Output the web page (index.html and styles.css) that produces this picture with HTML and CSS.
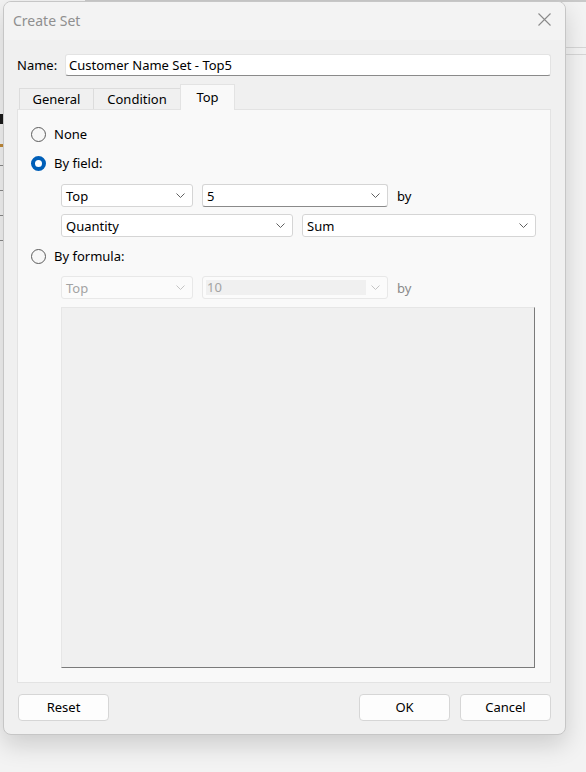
FILE: index.html
```html
<!DOCTYPE html>
<html>
<head>
<meta charset="utf-8">
<link rel="stylesheet" href="styles.css">
</head>
<body>
<div class="dialog">
  <div class="titlebar">
    <span class="title">Create Set</span>
    <svg class="close" width="13" height="13" viewBox="0 0 13 13"><path d="M0.5 0.5 L12.5 12.5 M12.5 0.5 L0.5 12.5" stroke="#8a8a8a" stroke-width="1.1" fill="none"/></svg>
  </div>
  <div class="content">
    <div class="name-row">
      <span class="name-label">Name:</span>
      <div class="name-input">Customer Name Set - Top5</div>
    </div>
    <div class="tabs">
      <div class="tab tab-general">General</div>
      <div class="tab tab-condition">Condition</div>
      <div class="tab tab-top active">Top</div>
    </div>
    <div class="panel">
      <div class="radio-row r-none"><span class="radio"></span><span>None</span></div>
      <div class="radio-row r-field"><span class="radio checked"></span><span>By field:</span></div>
      <div class="sel-row row1">
        <div class="select w-top"><span>Top</span><svg class="chev" width="9" height="5" viewBox="0 0 9 5"><path d="M0.5 0.5 L4.5 4.5 L8.5 0.5" stroke="#606060" fill="none"/></svg></div>
        <div class="select edit w-five"><span>5</span><svg class="chev" width="9" height="5" viewBox="0 0 9 5"><path d="M0.5 0.5 L4.5 4.5 L8.5 0.5" stroke="#606060" fill="none"/></svg></div>
        <span class="by">by</span>
      </div>
      <div class="sel-row row2">
        <div class="select w-qty"><span>Quantity</span><svg class="chev" width="9" height="5" viewBox="0 0 9 5"><path d="M0.5 0.5 L4.5 4.5 L8.5 0.5" stroke="#606060" fill="none"/></svg></div>
        <div class="select w-sum"><span>Sum</span><svg class="chev" width="9" height="5" viewBox="0 0 9 5"><path d="M0.5 0.5 L4.5 4.5 L8.5 0.5" stroke="#606060" fill="none"/></svg></div>
      </div>
      <div class="radio-row r-formula"><span class="radio"></span><span>By formula:</span></div>
      <div class="sel-row row3">
        <div class="select disabled w-top"><span>Top</span><svg class="chev" width="9" height="5" viewBox="0 0 9 5"><path d="M0.5 0.5 L4.5 4.5 L8.5 0.5" stroke="#c4c4c4" fill="none"/></svg></div>
        <div class="select disabled w-five"><span class="inner-field">10</span><svg class="chev" width="9" height="5" viewBox="0 0 9 5"><path d="M0.5 0.5 L4.5 4.5 L8.5 0.5" stroke="#c4c4c4" fill="none"/></svg></div>
        <span class="by disabled-text">by</span>
      </div>
      <div class="formula-box"></div>
    </div>
    <div class="buttons">
      <div class="btn">Reset</div>
      <div class="spacer"></div>
      <div class="btn">OK</div>
      <div class="btn">Cancel</div>
    </div>
  </div>
</div>
</body>
</html>
```
FILE: styles.css
```css
html, body {
  margin: 0;
  padding: 0;
}
body {
  width: 586px;
  height: 772px;
  overflow: hidden;
  background-color: #f3f3f3;
  background-image:
    linear-gradient(#c9c9c9, #c9c9c9),
    linear-gradient(#d6d6d6, #d6d6d6),
    linear-gradient(#d6d6d6, #d6d6d6),
    linear-gradient(#1a1a1a, #1a1a1a),
    linear-gradient(#c08a3a, #c08a3a),
    linear-gradient(#8a8a8a, #8a8a8a),
    linear-gradient(#8a8a8a, #8a8a8a),
    linear-gradient(#8a8a8a, #8a8a8a),
    linear-gradient(#8a8a8a, #8a8a8a);
  background-size:
    586px 2px,
    30px 1px,
    30px 1px,
    3px 10px,
    3px 3px,
    3px 1px,
    3px 1px,
    3px 1px,
    3px 1px;
  background-position:
    85px 0,
    566px 47px,
    566px 54px,
    0 114px,
    0 144px,
    0 165px,
    0 190px,
    0 215px,
    0 240px;
  background-repeat: no-repeat;
  font-family: "Noto Sans", "Open Sans", sans-serif;
  font-size: 13px;
  color: #000;
}
.dialog {
  margin: 1px 0 0 3px;
  width: 563px;
  height: 734px;
  box-sizing: border-box;
  border: 1px solid #c6c6c6;
  border-radius: 8px;
  background: #f0f0f0;
  box-shadow: 0 10px 24px rgba(0, 0, 0, 0.16);
  display: flex;
  flex-direction: column;
  overflow: hidden;
}
.titlebar {
  height: 38px;
  flex: none;
  background: #f3f3f3;
  display: flex;
  align-items: center;
  justify-content: space-between;
  padding: 0 14px 0 9px;
}
.title {
  color: #8f8f8f;
  font-size: 14px;
  margin-top: -1px;
}
.close {
  display: block;
  margin-top: -3px;
}
.content {
  flex: 1;
  display: flex;
  flex-direction: column;
  padding: 0 14px 0 13px;
}
.name-row {
  margin-top: 14px;
  height: 22px;
  display: flex;
  align-items: center;
}
.name-label {
  width: 48px;
  flex: none;
}
.name-input {
  flex: 1;
  height: 22px;
  box-sizing: border-box;
  background: #fff;
  border: 1px solid #e3e3e3;
  border-bottom: 1px solid #8a8a8a;
  border-radius: 3px;
  padding-left: 3px;
  line-height: 20px;
}
.tabs {
  margin-top: 8px;
  height: 25px;
  display: flex;
  align-items: flex-end;
  padding-left: 2px;
}
.tab {
  box-sizing: border-box;
  height: 21px;
  border: 1px solid #dcdcdc;
  border-bottom: none;
  background: #f0f0f0;
  text-align: center;
  line-height: 20px;
  margin-right: -1px;
}
.tab-general { width: 75px; }
.tab-condition { width: 88px; }
.tab-top { width: 55px; }
.tab.active {
  height: 26px;
  background: #f9f9f9;
  border-color: #e3e3e3;
  line-height: 24px;
  margin-bottom: -1px;
  position: relative;
  z-index: 1;
}
.panel {
  height: 574px;
  box-sizing: border-box;
  border: 1px solid #e3e3e3;
  background: #f9f9f9;
  padding-left: 13px;
  display: flex;
  flex-direction: column;
}
.radio-row {
  height: 20px;
  display: flex;
  align-items: center;
}
.r-none { margin-top: 14px; }
.r-field { margin-top: 9px; }
.r-formula { margin-top: 9px; }
.radio {
  width: 15px;
  height: 15px;
  box-sizing: border-box;
  border: 1px solid #5c5c5c;
  border-radius: 50%;
  background: #f7f7f7;
  margin-right: 8px;
  flex: none;
}
.radio.checked {
  border: 4.5px solid #005fb8;
  background: #fff;
}
.sel-row {
  display: flex;
  align-items: center;
  margin-left: 30px;
  height: 23px;
}
.row1 { margin-top: 11px; }
.row2 { margin-top: 7px; }
.row3 { margin-top: 10px; }
.select {
  height: 23px;
  box-sizing: border-box;
  background: #fff;
  border: 1px solid #d5d5d5;
  border-radius: 3px;
  display: flex;
  align-items: center;
  justify-content: space-between;
  padding: 0 7px 0 4px;
  margin-right: 9px;
}
.select.edit {
  border-bottom-color: #8a8a8a;
}
.w-top { width: 132px; }
.w-five { width: 186px; }
.w-qty { width: 232px; }
.w-sum { width: 234px; }
.select.disabled {
  background: #fbfbfb;
  border-color: #e8e8e8;
  color: #a3a3a3;
}
.inner-field {
  background: #f0f0f0;
  width: 159px;
  height: 15px;
  line-height: 15px;
  padding-left: 1px;
  margin-left: -1px;
}
.chev {
  display: block;
  flex: none;
}
.by {
  margin-left: 0;
}
.disabled-text {
  color: #8a8a8a;
}
.formula-box {
  margin-top: 8px;
  margin-left: 30px;
  width: 474px;
  height: 361px;
  box-sizing: border-box;
  background: #f0f0f0;
  border: 1px solid;
  border-color: #e6e6e6 #7a7a7a #7a7a7a #e6e6e6;
}
.buttons {
  margin-top: 11px;
  display: flex;
  height: 27px;
}
.spacer { flex: 1; }
.btn {
  width: 91px;
  height: 27px;
  box-sizing: border-box;
  background: #fdfdfd;
  border: 1px solid #d6d6d6;
  border-radius: 4px;
  text-align: center;
  line-height: 25px;
  margin-left: 10px;
}
.btn:first-child {
  margin-left: 1px;
}
```
